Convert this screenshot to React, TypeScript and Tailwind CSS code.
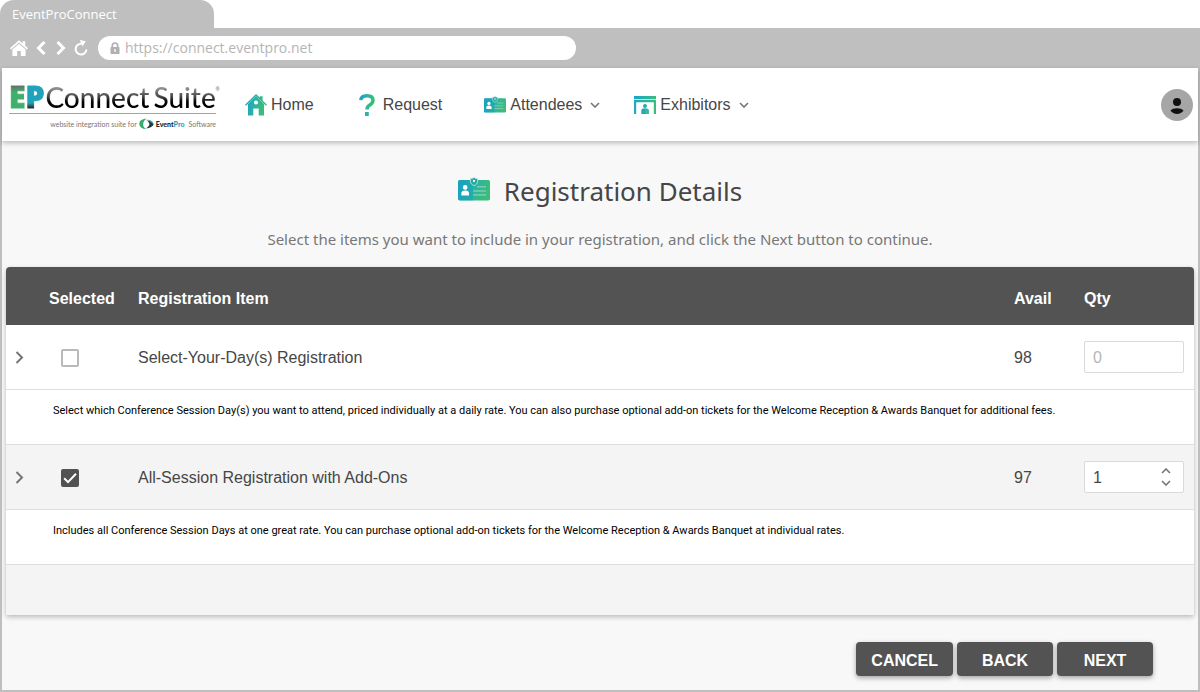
import { useState } from "react";
import type { ReactNode } from "react";

const chevronRight = "M1.5 1 7 6.5 1.5 12";

function Gradients() {
  return (
    <svg className="absolute size-0" aria-hidden="true">
      <defs>
        <linearGradient id="brand" x1="0" y1="0" x2="1" y2="0.3">
          <stop offset="0.1" stopColor="#1fa5bf" />
          <stop offset="0.5" stopColor="#2bb3a3" />
          <stop offset="1" stopColor="#3cbb7c" />
        </linearGradient>
      </defs>
    </svg>
  );
}

function BadgeIcon({ className }: { className: string }) {
  return (
    <svg viewBox="0 0 32 24" className={className} aria-hidden="true">
      <rect x="0" y="3" width="32" height="20.5" rx="1.8" fill="url(#brand)" />
      <path d="M1.8 3H15v20.5H1.8A1.8 1.8 0 0 1 0 21.7V4.8A1.8 1.8 0 0 1 1.8 3Z" fill="#169fbd" opacity="0.45" />
      <circle cx="7.2" cy="10.4" r="2.3" fill="#fff" />
      <path d="M3.4 18.5v-2.2c0-1.8 1.2-2.8 3.8-2.8s3.800 1 3.800 2.800v2.200Z" fill="#fff" />
      <path d="M12.4 1.6c1.5 0 2.6-.4 3.6-1.2 1 .8 2.1 1.2 3.6 1.2v2.8c0 2-1.3 3.3-3.6 4.2-2.3-.9-3.6-2.2-3.6-4.2Z" fill="#29a9a6" stroke="#b9e8df" strokeWidth="0.9" />
      <circle cx="16" cy="3.9" r="1.1" fill="#fff" />
      <path d="M19 9.8h9M15 14h13M15 17.9h13" stroke="#a5dfc8" strokeWidth="0.9" />
    </svg>
  );
}

function HouseIcon() {
  return (
    <svg viewBox="0 0 22 22" className="size-[22px]" aria-hidden="true">
      <path d="M0 10.7 11 0l3.800 3.600V2.200h2.800v4.200l4.400 4.300-1 1L11 2.200 1 11.700Z" fill="url(#brand)" />
      <path fillRule="evenodd" d="M11 2.200 19 10V21.600H13.700V14.600H8.300V21.600H3V10ZM11 6.400a2.100 2.100 0 1 0 0 4.200 2.100 2.100 0 0 0 0-4.200Z" fill="url(#brand)" />
    </svg>
  );
}

function QuestionIcon() {
  return (
    <svg viewBox="0 0 16 22" className="h-[22px] w-4" aria-hidden="true">
      <path d="M1.800 6.200C2 3.400 4.300 1.800 8 1.800c3.900 0 6 1.700 6 4.500 0 2.500-1.500 3.700-3.200 4.700C8.900 12.100 8 13 8 15.600" fill="none" stroke="url(#brand)" strokeWidth="3.5" />
      <rect x="6" y="18" width="3.8" height="4" fill="#2bb3a3" />
    </svg>
  );
}

function BoothIcon() {
  return (
    <svg viewBox="0 0 22 18" className="h-[18px] w-[22px]" aria-hidden="true">
      <path d="M0 0h22v3.200H0ZM0 4h22v14h-2.200V6.200H2.200V18H0Z" fill="url(#brand)" />
      <circle cx="11" cy="10" r="2" fill="#2ba9a6" />
      <path d="M7.300 18v-3.500c0-1.500 1.300-2.200 3.700-2.200s3.700.7 3.700 2.200V18Z" fill="#23a8b5" />
      <path d="M11 13v5h3.700v-4c-.4-.7-1.700-1.200-3.700-1Z" fill="#3cb98a" />
    </svg>
  );
}

function Chevron({ d = "M1 1l4 4 4-4" }: { d?: string }) {
  return (
    <svg viewBox="0 0 10 6" className="h-1.5 w-2.5" fill="none" stroke="#757575" strokeWidth="1.6" aria-hidden="true">
      <path d={d} />
    </svg>
  );
}

function Logo() {
  return (
    <a href="#home" aria-label="EventPro Connect Suite" className="flex w-[207px] shrink-0 flex-col pt-0.5">
      <span className="flex h-8 items-center border-b border-[#a3a3a3] leading-none whitespace-nowrap">
        <span className="bg-linear-to-b from-[#5c7a6b] from-15% to-[#3fb06a] to-35% bg-clip-text font-['Open_Sans'] text-[30px] font-extrabold text-transparent [-webkit-text-stroke:1px_transparent]">E</span>
        <span className="mr-px bg-linear-to-b from-[#1ea3bb] from-70% to-[#26343a] to-85% bg-clip-text font-['Open_Sans'] text-[30px] font-extrabold text-transparent [-webkit-text-stroke:1px_transparent]">P</span>
        <span className="relative flex gap-1 font-['Lato'] text-[28px] font-medium text-transparent">
          <span className="bg-linear-to-b from-[#8d8d8d] from-20% via-[#444] via-50% to-black to-75% bg-clip-text">Connect</span>
          <span className="bg-linear-to-b from-[#8d8d8d] from-20% via-[#444] via-50% to-black to-75% bg-clip-text">Suite</span>
          <span className="absolute top-1 -right-1 font-sans text-[5px] text-[#777]">®</span>
        </span>
      </span>
      <span className="flex items-center justify-end pt-1 font-['Lato'] text-[7px] leading-3 whitespace-nowrap text-[#777]">
        website integration suite for
        <svg viewBox="0 0 15 12" className="mx-0.5 h-3 w-[15px]" aria-hidden="true">
          <path d="M7.500.8C2.500.8.300 3.300.300 6c0 2.800 3 5.200 7 5.200C4.800 10 3.900 8 4.200 5.800 4.500 3.600 5.600 1.900 7.500.8Z" fill="#35ad68" />
          <path d="M7.200 2.200c1.700 1 3.200 2.200 3.200 3.800S9 8.800 7.200 10.400C10.500 10 13.500 8.600 14.700 6.400 13 4 10.500 2.500 7.200 2.200Z" fill="#243a40" />
          <path d="M7.500 1.400c3.800.2 6.800 2 7.200 4.600-1.600-1.900-4-3.400-7.200-4.600Z" fill="#209eb0" />
        </svg>
        <b className="font-black text-[#222]">Event</b>
        <b className="mr-1 font-black text-[#1ba0b5]">Pro</b>
        Software
      </span>
    </a>
  );
}

function NavItem({ icon, label, menu, className }: { icon: ReactNode; label: string; menu?: boolean; className: string }) {
  return (
    <a href={`#${label.toLowerCase()}`} className={`flex items-center ${className}`}>
      {icon}
      {label}
      {menu && <span className="ml-2"><Chevron /></span>}
    </a>
  );
}

function BrowserBar() {
  return (
    <div className="text-white">
      <div className="flex h-7 w-[214px] items-center rounded-t-[14px] bg-[#bfbfbf] px-3 pt-0.5 font-['Open_Sans'] text-[13px]">EventProConnect</div>
      <div className="flex h-10 items-center bg-[#bfbfbf] pl-2.5">
        <button aria-label="Home page" className="mr-2">
          <svg viewBox="0 0 18 16" className="h-4 w-[18px]" fill="currentColor" aria-hidden="true">
            <path d="M0 8.200 9 .300l3.600 3.200V1.300h2.600v4.500L18 8.200l-1.100 1.200L9 2.500 1.100 9.400Z" />
            <path d="M9 3.800 15.600 9.600V16h-4.800v-5H7.200v5H2.400V9.600Z" />
          </svg>
        </button>
        <button aria-label="Back a page" className="mr-2.5">
          <svg viewBox="0 0 10 14" className="h-3.5 w-2.5" fill="none" stroke="currentColor" strokeWidth="3" aria-hidden="true"><path d="M8.500 1 2.500 7l6 6" /></svg>
        </button>
        <button aria-label="Forward a page" className="mr-2">
          <svg viewBox="0 0 10 14" className="h-3.5 w-2.5" fill="none" stroke="currentColor" strokeWidth="3" aria-hidden="true"><path d="m1.500 1 6 6-6 6" /></svg>
        </button>
        <button aria-label="Reload" className="mr-2.5">
          <svg viewBox="0 0 14 16" className="h-4 w-3.5" aria-hidden="true">
            <path d="M7.500 3.800A5.400 5.400 0 1 0 12.400 9.500" fill="none" stroke="currentColor" strokeWidth="2" />
            <path d="M5.800 0 11.800 1.200 8.400 6.600Z" fill="currentColor" />
          </svg>
        </button>
        <div className="flex h-6 w-[478px] items-center rounded-full bg-white pl-3 text-[#b5b5b5]">
          <svg viewBox="0 0 10 12" className="mr-[5px] h-3 w-2.5" aria-hidden="true">
            <path d="M2.300 6V3.700a2.700 2.700 0 0 1 5.400 0V6" fill="none" stroke="#b0b0b0" strokeWidth="1.700" />
            <rect x="0.500" y="5" width="9" height="7" rx="0.800" fill="#b0b0b0" />
            <path d="M5 7v3" stroke="#fff" strokeWidth="1.400" />
          </svg>
          <input aria-label="Address" className="min-w-0 flex-1 bg-transparent font-['Open_Sans'] text-sm outline-none" defaultValue="https://connect.eventpro.net" />
        </div>
      </div>
    </div>
  );
}

type Item = { id: string; name: string; avail: number; text: string };

const items: Item[] = [
  {
    id: "days",
    name: "Select-Your-Day(s) Registration",
    avail: 98,
    text: "Select which Conference Session Day(s) you want to attend, priced individually at a daily rate. You can also purchase optional add-on tickets for the Welcome Reception & Awards Banquet for additional fees.",
  },
  {
    id: "all",
    name: "All-Session Registration with Add-Ons",
    avail: 97,
    text: "Includes all Conference Session Days at one great rate. You can purchase optional add-on tickets for the Welcome Reception & Awards Banquet at individual rates.",
  },
];

function ItemRows({ item, initial }: { item: Item; initial: number }) {
  const [qty, setQty] = useState(initial);
  const on = qty > 0;
  return (
    <>
      <tr className={`h-[65px] *:border-b *:border-[#ddd] ${on ? "bg-[#f4f4f4]" : "bg-white"}`}>
        <td className="pl-[9px]">
          <button aria-label={`Expand ${item.name}`} className="block">
            <svg viewBox="0 0 9 13" className="h-[13px] w-[9px]" fill="none" stroke="#757575" strokeWidth="2" aria-hidden="true"><path d={chevronRight} /></svg>
          </button>
        </td>
        <td className="pt-0.5 pl-3">
          <span className="grid size-[18px]">
            <input
              id={item.id}
              type="checkbox"
              checked={on}
              onChange={(e) => setQty(e.target.checked ? 1 : 0)}
              className="col-start-1 row-start-1 size-[18px] appearance-none rounded-xs border-2 border-[#bababa] bg-white checked:border-[#525252] checked:bg-[#525252]"
            />
            {on && (
              <svg viewBox="0 0 18 18" className="pointer-events-none col-start-1 row-start-1 size-[18px]" fill="none" stroke="#fff" strokeWidth="2" aria-hidden="true"><path d="m3.200 9.200 3.800 3.900 8-8.300" /></svg>
            )}
          </span>
        </td>
        <td className="pt-px"><label htmlFor={item.id}>{item.name}</label></td>
        <td className="pt-px">{item.avail}</td>
        <td className="pr-2.5">
          <div className="flex h-8 items-center rounded-xs border border-[#d9d9d9] bg-white pr-3 pl-2">
            <input
              type="number"
              min={0}
              aria-label={`Quantity of ${item.name}`}
              value={qty}
              disabled={!on}
              onChange={(e) => setQty(Number(e.target.value))}
              className="w-full min-w-0 flex-1 [appearance:textfield] bg-transparent pt-0.5 outline-none disabled:text-[#b5b5b5] [&::-webkit-inner-spin-button]:appearance-none"
            />
            {on && (
              <span className="flex flex-col gap-1.5">
                <button aria-label="Increase" onClick={() => setQty(qty + 1)}><Chevron d="M1 5l4-4 4 4" /></button>
                <button aria-label="Decrease" onClick={() => setQty(Math.max(0, qty - 1))}><Chevron /></button>
              </span>
            )}
          </div>
        </td>
      </tr>
      <tr className="h-[55px] bg-white">
        <td colSpan={5} className="border-b border-[#ddd] pt-3 pl-[47px] align-top font-['Roboto',sans-serif] text-[11px] leading-[18px] text-black">{item.text}</td>
      </tr>
    </>
  );
}

export default function App() {
  return (
    <div className="flex min-h-screen flex-col bg-white font-['Liberation_Sans',Arial,sans-serif] text-base text-[#464646]">
      <Gradients />
      <BrowserBar />
      <div className="flex flex-1 flex-col border-x-2 border-b-2 border-[#bfbfbf] bg-[#f8f8f8]">
        <header className="flex h-[73px] items-center bg-white pr-[5px] pl-[7px] shadow-[0_2px_5px_rgba(0,0,0,0.25)]">
          <Logo />
          <nav className="flex flex-1 items-center pl-[29px]">
            <NavItem icon={<span className="mr-1"><HouseIcon /></span>} label="Home" className="mr-[45px]" />
            <NavItem icon={<span className="mr-2"><QuestionIcon /></span>} label="Request" className="mr-[42px]" />
            <NavItem icon={<BadgeIcon className="mr-1 h-[17px] w-[22px]" />} label="Attendees" menu className="mr-[34px]" />
            <NavItem icon={<span className="mr-1"><BoothIcon /></span>} label="Exhibitors" menu className="" />
          </nav>
          <button aria-label="Account" className="size-8 rounded-full bg-[#a6a6a6]">
            <svg viewBox="0 0 32 32" className="size-8" fill="#111" aria-hidden="true">
              <circle cx="16" cy="13" r="4" />
              <path d="M9.500 21.700c1.400-1.600 3.800-2.400 6.500-2.400s5.100.8 6.500 2.400c-1.500 2-3.800 3.200-6.500 3.200s-5-1.200-6.500-3.200Z" />
            </svg>
          </button>
        </header>
        <main className="flex flex-col px-1">
          <h1 className="flex items-center justify-center gap-3.5 pt-[30px] font-['Noto_Sans',sans-serif] text-[26px] leading-10">
            <BadgeIcon className="mb-1 h-6 w-8" />
            Registration Details
          </h1>
          <p className="pt-4 pb-4 text-center font-['Noto_Sans',sans-serif] text-[15px] leading-6 text-[#777]">
            Select the items you want to include in your registration, and click the Next button to continue.
          </p>
          <div className="overflow-hidden rounded-t shadow-[0_2px_5px_rgba(0,0,0,0.25)]">
            <table className="w-full table-fixed border-separate border-spacing-0 text-left">
              <colgroup>
                <col className="w-[43px]" />
                <col className="w-[89px]" />
                <col />
                <col className="w-[70px]" />
                <col className="w-[110px]" />
              </colgroup>
              <thead className="bg-[#535353] text-white">
                <tr className="h-[58px] *:pt-[5px]">
                  <th aria-label="Expand" />
                  <th>Selected</th>
                  <th>Registration Item</th>
                  <th>Avail</th>
                  <th>Qty</th>
                </tr>
              </thead>
              <tbody>
                <ItemRows item={items[0]} initial={0} />
                <ItemRows item={items[1]} initial={1} />
              </tbody>
              <tfoot className="bg-[#f4f4f4]">
                <tr className="h-[50px]"><td colSpan={5} /></tr>
              </tfoot>
            </table>
          </div>
          <div className="flex justify-end gap-1 pt-[27px] pr-[41px] pb-3.5 font-bold text-white">
            {["CANCEL", "BACK", "NEXT"].map((label) => (
              <button key={label} className="h-[34px] min-w-24 rounded bg-[#535353] px-[15px] pt-1 shadow-[0_2px_5px_rgba(0,0,0,0.35)]">{label}</button>
            ))}
          </div>
        </main>
      </div>
    </div>
  );
}
